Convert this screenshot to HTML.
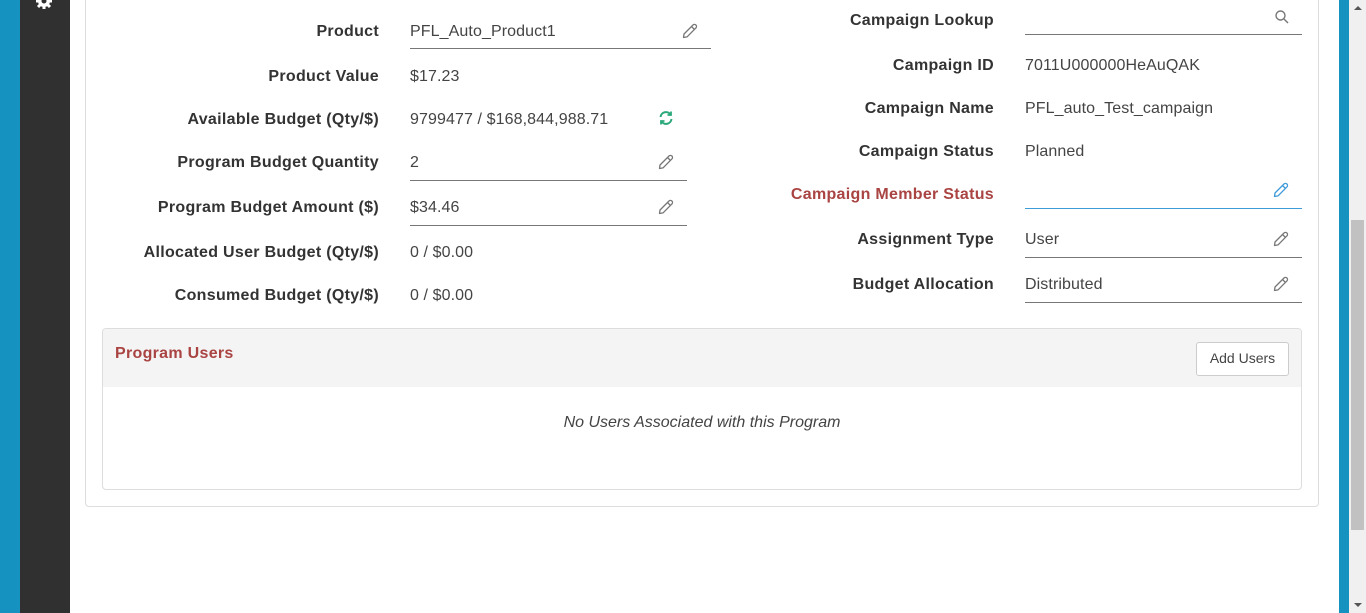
<!DOCTYPE html>
<html><head><meta charset="utf-8"><style>
*{margin:0;padding:0;box-sizing:border-box}
body{width:1366px;height:613px;overflow:hidden;background:#fff;font-family:"Liberation Sans",sans-serif;font-size:16px;color:#333;position:relative}
.a{position:absolute}
.lbl{position:absolute;font-weight:bold;color:#333;text-align:right;white-space:nowrap;letter-spacing:0.3px}
.val{position:absolute;color:#444;white-space:nowrap;letter-spacing:0.1px}
.line{position:absolute;height:1px;background:#777}
</style></head><body>
<div class="a" style="left:0;top:0;width:20px;height:613px;background:#1592bf"></div>
<div class="a" style="left:20px;top:0;width:50px;height:613px;background:#303030"></div>
<svg class="a" style="left:35px;top:-8px" width="18" height="18" viewBox="0 0 18 18"><circle cx="9" cy="9" r="6" fill="#fff"/><g stroke="#fff" stroke-width="3"><line x1="9" y1="1" x2="9" y2="17"/><line x1="1" y1="9" x2="17" y2="9"/><line x1="3" y1="3" x2="15" y2="15"/><line x1="15" y1="3" x2="3" y2="15"/></g><circle cx="9" cy="9" r="2.5" fill="#303030"/></svg>
<div class="a" style="left:1339px;top:0;width:10px;height:613px;background:#1592bf"></div>
<div class="a" style="left:1349px;top:0;width:17px;height:613px;background:#f0f0f0"></div>
<div class="a" style="left:1351px;top:220px;width:13px;height:310px;background:#c1c1c1"></div>
<div class="a" style="left:1354px;top:6px;width:0;height:0;border-left:4px solid transparent;border-right:4px solid transparent;border-bottom:4px solid #555"></div>
<div class="a" style="left:1354px;top:603px;width:0;height:0;border-left:4px solid transparent;border-right:4px solid transparent;border-top:4px solid #555"></div>

<div class="a" style="left:85px;top:-5px;width:1234px;height:512px;border:1px solid #ddd;border-radius:4px"></div>

<div class="lbl" style="right:987px;top:23px">Product</div>
<div class="val" style="left:410px;top:23px">PFL_Auto_Product1</div>
<div class="line" style="left:410px;top:48px;width:301px"></div>
<div class="lbl" style="right:987px;top:68px">Product Value</div>
<div class="val" style="left:410px;top:68px">$17.23</div>
<div class="lbl" style="right:987px;top:111px">Available Budget (Qty/$)</div>
<div class="val" style="left:410px;top:111px">9799477 / $168,844,988.71</div>
<div class="lbl" style="right:987px;top:154px">Program Budget Quantity</div>
<div class="val" style="left:410px;top:154px">2</div>
<div class="line" style="left:410px;top:180px;width:277px"></div>
<div class="lbl" style="right:987px;top:199px">Program Budget Amount ($)</div>
<div class="val" style="left:410px;top:199px">$34.46</div>
<div class="line" style="left:410px;top:225px;width:277px"></div>
<div class="lbl" style="right:987px;top:244px">Allocated User Budget (Qty/$)</div>
<div class="val" style="left:410px;top:244px">0 / $0.00</div>
<div class="lbl" style="right:987px;top:287px">Consumed Budget (Qty/$)</div>
<div class="val" style="left:410px;top:287px">0 / $0.00</div>

<div class="lbl" style="right:372px;top:12px">Campaign Lookup</div>
<div class="line" style="left:1025px;top:34px;width:277px"></div>
<div class="lbl" style="right:372px;top:57px">Campaign ID</div>
<div class="val" style="left:1025px;top:57px">7011U000000HeAuQAK</div>
<div class="lbl" style="right:372px;top:100px">Campaign Name</div>
<div class="val" style="left:1025px;top:100px">PFL_auto_Test_campaign</div>
<div class="lbl" style="right:372px;top:143px">Campaign Status</div>
<div class="val" style="left:1025px;top:143px">Planned</div>
<div class="lbl" style="right:372px;top:186px;color:#a94442">Campaign Member Status</div>
<div class="line" style="left:1025px;top:208px;width:277px;background:#3f9ad8"></div>
<div class="lbl" style="right:372px;top:231px">Assignment Type</div>
<div class="val" style="left:1025px;top:231px">User</div>
<div class="line" style="left:1025px;top:257px;width:277px"></div>
<div class="lbl" style="right:372px;top:276px">Budget Allocation</div>
<div class="val" style="left:1025px;top:276px">Distributed</div>
<div class="line" style="left:1025px;top:302px;width:277px"></div>

<svg class="a" style="left:1274px;top:9px" width="16" height="16" viewBox="0 0 16 16" fill="none" stroke="#777" stroke-width="1.4"><circle cx="6.5" cy="6.5" r="4.5"/><line x1="10" y1="10" x2="14" y2="14"/></svg>
<svg width="0" height="0" style="position:absolute"><defs><g id="pen"><path d="M2.5 15.5 L3 12 L12 3 A1.6 1.6 0 0 1 14.9 5.9 L6 14.9 Z M10.5 4.5 L13.5 7.5" fill="none" stroke-width="1.3" stroke-linejoin="round"/></g></defs></svg>
<svg class="a" style="left:681px;top:22px" width="18" height="18" stroke="#777"><use href="#pen"/></svg>
<svg class="a" style="left:657px;top:153px" width="18" height="18" stroke="#777"><use href="#pen"/></svg>
<svg class="a" style="left:657px;top:198px" width="18" height="18" stroke="#777"><use href="#pen"/></svg>
<svg class="a" style="left:1272px;top:181px" width="18" height="18" stroke="#3f9ad8"><use href="#pen"/></svg>
<svg class="a" style="left:1272px;top:230px" width="18" height="18" stroke="#777"><use href="#pen"/></svg>
<svg class="a" style="left:1272px;top:275px" width="18" height="18" stroke="#777"><use href="#pen"/></svg>
<svg class="a" style="left:658px;top:110px" width="16" height="16" viewBox="0 0 16 16" fill="none" stroke="#2aa87a" stroke-width="2"><path d="M2.5 7 A5.5 5.5 0 0 1 12.5 4.5"/><path d="M13.5 9 A5.5 5.5 0 0 1 3.5 11.5"/><path d="M13 1.5 V5 H9.5" stroke-width="1.8"/><path d="M3 14.5 V11 H6.5" stroke-width="1.8"/></svg>

<div class="a" style="left:102px;top:328px;width:1200px;height:162px;border:1px solid #ddd;border-radius:4px;overflow:hidden">
 <div style="height:58px;background:#f4f4f4;position:relative">
  <div class="a" style="left:12px;top:16px;font-weight:bold;color:#a94442;letter-spacing:0.3px">Program Users</div>
  <div class="a" style="right:12px;top:13px;width:93px;height:34px;border:1px solid #ccc;border-radius:3px;background:#fff;font-size:14px;color:#444;text-align:center;line-height:31px">Add Users</div>
 </div>
 <div style="text-align:center;font-style:italic;color:#444;margin-top:27px">No Users Associated with this Program</div>
</div>
</body></html>
